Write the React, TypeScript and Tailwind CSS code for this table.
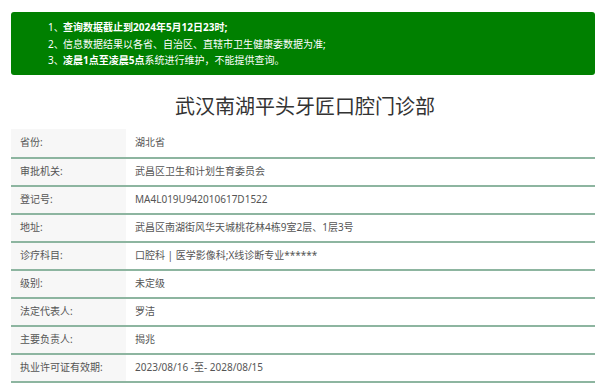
import React from "react";

const rows: [string, string][] = [
  ["省份:", "湖北省"],
  ["审批机关:", "武昌区卫生和计划生育委员会"],
  ["登记号:", "MA4L019U942010617D1522"],
  ["地址:", "武昌区南湖街风华天城桃花林4栋9室2层、1层3号"],
  ["诊疗科目:", "口腔科 | 医学影像科;X线诊断专业******"],
  ["级别:", "未定级"],
  ["法定代表人:", "罗洁"],
  ["主要负责人:", "揭兆"],
  ["执业许可证有效期:", "2023/08/16 -至- 2028/08/15"],
];

export default function App() {
  return (
    <div
      className="w-[600px] h-[391px] bg-white overflow-hidden"
      style={{ fontFamily: '"Noto Sans", "Noto Sans CJK SC", sans-serif' }}
    >
      <div className="pt-[12px] pl-[11px] w-[595px]">
        <div className="bg-[#008000] rounded-[3px] text-white text-[10px] leading-[16.5px] pt-[7px] pb-[6px] pl-[37px]">
          <div className="flex">
            <span className="w-[15px]">1、</span>
            <span className="font-bold">查询数据截止到2024年5月12日23时;</span>
          </div>
          <div className="flex">
            <span className="w-[15px]">2、</span>
            <span>信息数据结果以各省、自治区、直辖市卫生健康委数据为准;</span>
          </div>
          <div className="flex">
            <span className="w-[15px]">3、</span>
            <span>
              <span className="font-bold">凌晨1点至凌晨5点</span>系统进行维护，不能提供查询。
            </span>
          </div>
        </div>
        <div className="text-center text-[20px] leading-[24px] text-[#333] mt-[20px] mb-[10px] pl-[4px]">
          武汉南湖平头牙匠口腔门诊部
        </div>
        <div className="flex flex-col">
          {rows.map(([k, v], i) => (
            <div
              key={i}
              className={`flex h-[28px] text-[10px] text-[#555] ${
                i === 0 ? "" : "border-t-2 border-[#8db5a0]"
              }`}
            >
              <div className="w-[115px] bg-[#f7f7f7] pl-[9px] flex items-center">{k}</div>
              <div className="pl-[9px] flex items-center">{v}</div>
            </div>
          ))}
          <div className="border-t-2 border-[#8db5a0]" />
        </div>
      </div>
    </div>
  );
}
